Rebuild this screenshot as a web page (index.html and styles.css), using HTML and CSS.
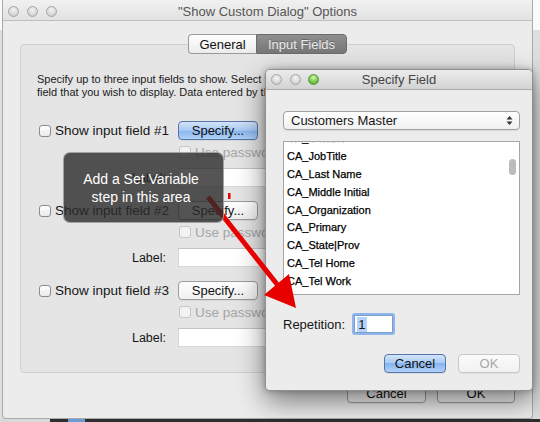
FILE: index.html
```html
<!DOCTYPE html>
<html>
<head>
<meta charset="utf-8">
<link rel="stylesheet" href="styles.css">
</head>
<body>
<div class="desk">
  <div class="win main">
    <div class="titlebar">
      <div class="lights"><i class="light"></i><i class="light"></i><i class="light"></i></div>
      <div class="title">"Show Custom Dialog" Options</div>
    </div>
    <div class="content">
      <div class="tabs"><span class="seg">General</span><span class="seg on">Input Fields</span></div>
      <div class="group">
        <p class="desc">Specify up to three input fields to show. Select the target<br>field that you wish to display. Data entered by the user is stored there.</p>
        <div class="field">
          <div class="frow"><span class="check"><i class="cb"></i>Show input field #1</span><button class="btn def">Specify...</button></div>
          <div class="frow use"><span></span><span class="check off"><i class="cb"></i>Use password character</span></div>
          <div class="frow lab"><span class="lbl">Label:</span><span class="input"></span></div>
        </div>
        <div class="field">
          <div class="frow"><span class="check"><i class="cb"></i>Show input field #2</span><button class="btn">Specify...</button></div>
          <div class="frow use"><span></span><span class="check off"><i class="cb"></i>Use password character</span></div>
          <div class="frow lab"><span class="lbl">Label:</span><span class="input"></span></div>
        </div>
        <div class="field">
          <div class="frow"><span class="check"><i class="cb"></i>Show input field #3</span><button class="btn">Specify...</button></div>
          <div class="frow use"><span></span><span class="check off"><i class="cb"></i>Use password character</span></div>
          <div class="frow lab"><span class="lbl">Label:</span><span class="input"></span></div>
        </div>
      </div>
      <div class="footer"><button class="btn cancel">Cancel</button><button class="btn ok">OK</button></div>
    </div>
  </div>

  <div class="win dialog">
    <div class="dtitlebar">
      <div class="lights dl"><i class="light"></i><i class="light"></i><i class="light green"></i></div>
      <div class="dtitle">Specify Field</div>
    </div>
    <div class="dbody">
      <div class="popup"><span>Customers Master</span>
        <svg class="updown" width="7" height="11" viewBox="0 0 7 11"><path d="M3.5 1 L6.5 4.5 H0.5 Z M3.5 10 L6.5 6.5 H0.5 Z" fill="#333"/></svg>
      </div>
      <div class="list">
        <ul>
          <li>CA_Gender</li>
          <li>CA_JobTitle</li>
          <li>CA_Last Name</li>
          <li>CA_Middle Initial</li>
          <li>CA_Organization</li>
          <li>CA_Primary</li>
          <li>CA_State|Prov</li>
          <li>CA_Tel Home</li>
          <li>CA_Tel Work</li>
        </ul>
        <span class="thumb"></span>
      </div>
      <div class="rep"><span>Repetition:</span><span class="repin"><span class="sel">1</span></span></div>
      <div class="dbtns"><button class="btn def">Cancel</button><button class="btn dis">OK</button></div>
    </div>
  </div>

  <svg class="arrow" width="540" height="422" viewBox="0 0 540 422">
    <line x1="208" y1="197" x2="280" y2="288" stroke="#e60000" stroke-width="5"/>
    <polygon points="296,308 264,295 289,274" fill="#e60000"/>
    <rect x="228" y="193" width="2.5" height="6" fill="#e60000"/>
  </svg>

  <div class="tip">Add a Set Variable<br>step in this area</div>

  <div class="dock"></div>
</div>
</body>
</html>
```
FILE: styles.css
```css
body {
  margin: 0;
  width: 540px;
  height: 422px;
  overflow: hidden;
  font-family: "Lucida Grande", "Liberation Sans", Arial, sans-serif;
  color: #161616;
}

.desk {
  position: relative;
  width: 540px;
  height: 422px;
  background: linear-gradient(#fafafa 0 30px, #dedede 30px);
  display: flex;
  flex-direction: column;
  justify-content: flex-end;
}

.dock {
  height: 3px;
  background: linear-gradient(to right, #d9d9d9 0 50px, #2e2e2e 50px 68px, #6c9bd6 68px 85px, #2e2e2e 85px);
}

.win {
  position: absolute;
  box-sizing: border-box;
  background: #ececec;
}

.main {
  left: 2px;
  top: 0;
  width: 531px;
  height: 419px;
  border: 1px solid #a9a9a9;
  border-top: none;
  border-radius: 0 0 4px 4px;
}

.titlebar {
  height: 21px;
  box-sizing: border-box;
  padding-top: 2px;
  display: grid;
  grid-template-columns: 1fr auto 1fr;
  align-items: center;
  background: linear-gradient(#f1f1f1, #e2e2e2);
  border-bottom: 1px solid #bdbdbd;
}

.lights {
  display: flex;
  gap: 8px;
  padding-left: 5px;
}

.lights.dl {
  gap: 7.5px;
  padding-left: 5px;
}

.light {
  width: 11px;
  height: 11px;
  box-sizing: border-box;
  border-radius: 50%;
  border: 1px solid #a6a6a6;
  background: radial-gradient(circle at 50% 35%, #f4f4f4, #d0d0d0 75%);
}

.light.green {
  border-color: #4f9a32;
  background: radial-gradient(circle at 50% 30%, #d4f5b0, #74c244 60%, #4fa12c);
}

.title {
  font-size: 13px;
  color: #555;
  white-space: nowrap;
}

.content {
  padding: 13px 17px 0;
}

.tabs {
  position: relative;
  z-index: 1;
  display: flex;
  justify-content: center;
  height: 20px;
}

.seg {
  height: 20px;
  box-sizing: border-box;
  display: flex;
  align-items: center;
  justify-content: center;
  font-size: 13px;
  border: 1px solid #9a9a9a;
  background: linear-gradient(#ffffff, #ececec);
  color: #111;
}

.seg:first-child {
  width: 68px;
  border-right: none;
  border-radius: 4px 0 0 4px;
}

.seg.on {
  width: 91px;
  border-radius: 0 4px 4px 0;
  border-color: #6c6c6c;
  background: linear-gradient(#8f8f8f, #777);
  color: #ececec;
  text-shadow: 0 -1px 0 rgba(0, 0, 0, .25);
}

.group {
  margin-top: -10px;
  border: 1px solid #cfcfcf;
  border-radius: 4px;
  background: #e5e5e5;
  padding: 28px 16px 25px;
}

.desc {
  margin: 0 0 23px;
  font-size: 11px;
  line-height: 12.5px;
  white-space: nowrap;
  color: #1a1a1a;
}

.field + .field {
  margin-top: 14px;
}

.frow {
  display: grid;
  grid-template-columns: 141px auto;
  align-items: center;
  height: 19px;
}

.frow.use {
  margin-top: 4px;
  height: 16px;
}

.frow.lab {
  margin-top: 8px;
}

.check {
  display: flex;
  align-items: center;
  gap: 4px;
  font-size: 13.5px;
  white-space: nowrap;
  padding-left: 2px;
}

.frow.use .check {
  padding-left: 1px;
}

.cb {
  width: 12px;
  height: 12px;
  box-sizing: border-box;
  border: 1px solid #8c8c8c;
  border-radius: 3px;
  background: linear-gradient(#ffffff, #e9e9e9);
  flex: none;
}

.check.off {
  color: #a6a6a6;
}

.check.off .cb {
  border-color: #c6c6c6;
  background: #f2f2f2;
}

.lbl {
  font-size: 12.5px;
  text-align: right;
  padding-right: 12px;
}

.input {
  display: block;
  width: 320px;
  height: 19px;
  box-sizing: border-box;
  background: #fff;
  border: 1px solid #d6d6d6;
  border-top-color: #c4c4c4;
}

.btn {
  font-family: "Lucida Grande", "Liberation Sans", Arial, sans-serif;
  font-size: 13px;
  color: #111;
  width: 80px;
  height: 19px;
  padding: 0;
  box-sizing: border-box;
  border: 1px solid #9c9c9c;
  border-radius: 4px;
  background: linear-gradient(#ffffff, #f0f0f0);
  box-shadow: 0 1px 0 rgba(0, 0, 0, .06);
}

.btn.def {
  border-color: #5575ab;
  background: linear-gradient(#d3e4fa, #a6c9f4 50%, #86b4ef 50%, #b0d2f8);
}

.btn.dis {
  color: #a8a8a8;
  border-color: #c8c8c8;
  background: linear-gradient(#fbfbfb, #f1f1f1);
}

.footer {
  margin-top: 10px;
  display: flex;
  justify-content: flex-end;
  gap: 11px;
}

.footer .btn {
  height: 20px;
}

.footer .cancel {
  width: 79px;
}

.footer .ok {
  width: 78px;
}

.dialog {
  left: 265px;
  top: 69px;
  width: 268px;
  height: 322px;
  border: 1px solid #8f8f8f;
  border-radius: 5px 5px 4px 4px;
  box-shadow: 0 10px 28px rgba(0, 0, 0, .5), 0 0 6px rgba(0, 0, 0, .25);
  z-index: 2;
}

.dtitlebar {
  height: 20px;
  box-sizing: border-box;
  display: grid;
  grid-template-columns: 1fr auto 1fr;
  align-items: center;
  background: linear-gradient(#ececec, #d3d3d3);
  border-bottom: 1px solid #ababab;
  border-radius: 4px 4px 0 0;
}

.dtitle {
  font-size: 13px;
  color: #444;
}

.dbody {
  padding: 21px 12px 17px 17px;
}

.popup {
  height: 19px;
  box-sizing: border-box;
  border: 1px solid #a2a2a2;
  border-radius: 4px;
  background: linear-gradient(#ffffff, #f0f0f0);
  display: flex;
  align-items: center;
  justify-content: space-between;
  padding: 0 6px 0 7px;
  font-size: 13px;
  box-shadow: 0 1px 1px rgba(0, 0, 0, .08);
}

.list {
  position: relative;
  margin-top: 11px;
  height: 154px;
  box-sizing: border-box;
  border: 1px solid #a6a6a6;
  background: #fff;
  overflow: hidden;
}

.list ul {
  margin: -11.7px 0 0;
  padding: 0 0 0 3px;
  list-style: none;
  font-size: 11px;
  line-height: 17.8px;
  color: #000;
  -webkit-text-stroke: 0.25px #000;
}

.thumb {
  position: absolute;
  left: 225px;
  top: 17px;
  width: 7px;
  height: 16px;
  border-radius: 4px;
  background: #bcbcbc;
}

.rep {
  margin-top: 20px;
  display: flex;
  align-items: center;
  gap: 9px;
  font-size: 13px;
}

.repin {
  width: 39px;
  height: 18px;
  box-sizing: border-box;
  border: 1px solid #7d9ccb;
  box-shadow: 0 0 0 2px #8fb6ec;
  border-radius: 1px;
  background: #fff;
  padding-left: 2px;
  display: flex;
  align-items: center;
}

.sel {
  background: #b4d4fb;
  padding: 0 2px 0 1px;
  line-height: 15px;
}

.dbtns {
  margin-top: 21px;
  display: flex;
  justify-content: flex-end;
  gap: 12px;
}

.dbtns .btn {
  width: 62px;
}

.arrow {
  position: absolute;
  left: 0;
  top: 0;
  z-index: 3;
  pointer-events: none;
}

.tip {
  position: absolute;
  left: 63px;
  top: 152px;
  width: 161px;
  height: 71px;
  box-sizing: border-box;
  border-radius: 7px;
  background: rgba(42, 42, 42, .8);
  border: 1px solid rgba(230, 230, 230, .55);
  color: #fff;
  font-size: 14px;
  line-height: 18px;
  text-align: center;
  padding: 17px 5px 0 0;
  z-index: 4;
}
```
